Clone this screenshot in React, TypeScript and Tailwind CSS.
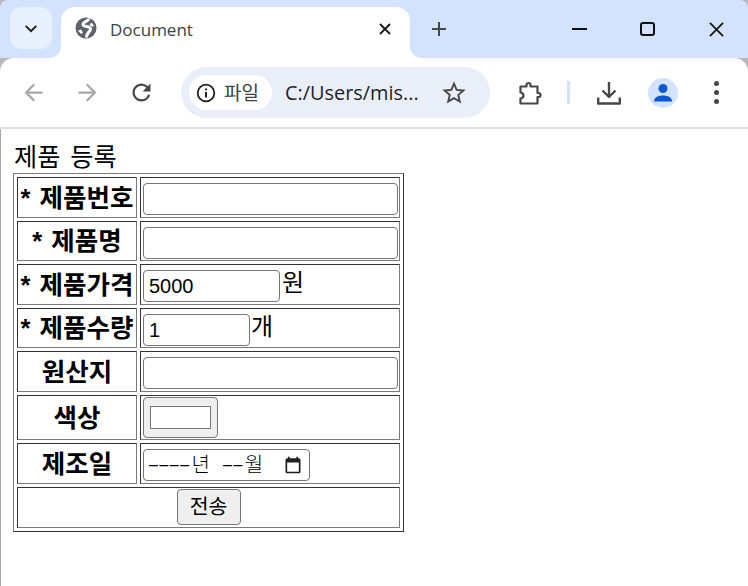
import React from "react";

const cellBorder = "border border-t-[#333333] border-l-[#333333] border-r-[#7a7a7a] border-b-[#7a7a7a] p-0";
const thBase = `${cellBorder} w-[120px] pt-[2px] text-center align-middle font-bold text-[25.500px] leading-none whitespace-nowrap [word-spacing:2px]`;
const tdBase = `${cellBorder} w-[260px] pl-[2px] pt-[5px] align-top`;
const inputBase = "block h-[32px] border border-[#767676] rounded-[4px] bg-white px-[5px] text-[20px] text-black outline-none [font-family:'Liberation_Sans',sans-serif]";

const Ico = ({ x = 24, cls, children }: { x?: number; cls: string; children: React.ReactNode }) => (
  <svg viewBox={`0 0 ${x} ${x}`} className={cls} fill="currentColor">{children}</svg>
);

const Label = ({ star, children }: { star?: boolean; children: string }) => (
  <span>{star ? "* " : ""}{children}</span>
);

function Tabs() {
  return (
    <div className="relative flex h-[58px] shrink-0 rounded-t-[8px] bg-[#d3e3fd] pt-[7px]">
      <div className="ml-[10px] flex h-[42px] w-[42px] items-center justify-center rounded-[12px] bg-[#e8f0fe] text-[#1f1f1f]">
        <Ico cls="h-[20px] w-[20px]"><path d="M6.400 8.600 12 14.200l5.600-5.600 1.600 1.600L12 17.400 4.800 10.200z" /></Ico>
      </div>
      <div className="relative ml-[9px] flex h-[51px] w-[349px] items-center rounded-t-[14px] bg-white pb-[5px] pl-[14px]">
        <svg viewBox="0 0 12 12" className="absolute bottom-0 left-[-12px] h-[12px] w-[12px] text-white" fill="currentColor"><path d="M12 0v12H0c7 0 12-5 12-12z" /></svg>
        <svg viewBox="0 0 12 12" className="absolute bottom-0 right-[-12px] h-[12px] w-[12px] text-white" fill="currentColor"><path d="M0 0v12h12C5 12 0 7 0 0z" /></svg>
        <svg viewBox="0 0 22 22" className="mb-[4px] h-[22px] w-[22px]">
          <circle cx="11" cy="11" r="10.500" fill="#5f6368" />
          <path d="M13.500 1.500c.5 3-5.500 2.500-5.500 6 0 3 7.500 1 7.500 4.500 0 3-4 3-4 8.500" fill="none" stroke="#ffffff" strokeWidth="3" />
          <path d="M16.500 5.500l2.500 3-1.500 1.500-3-2zM3 13.500l3-1 2 3-2 1.500z" fill="#ffffff" />
        </svg>
        <span className="ml-[13px] text-[17px] text-[#3c4043] [font-family:'Open_Sans',sans-serif]">Document</span>
        <svg viewBox="0 0 14 14" className="absolute right-[18px] top-[15px] h-[14px] w-[14px] text-[#1f1f1f]" fill="none" stroke="currentColor" strokeWidth="2"><path d="M2 2l10 10M12 2 2 12" /></svg>
      </div>
      <svg viewBox="0 0 16 16" className="ml-[21px] mt-[14px] h-[16px] w-[16px] text-[#474747]" fill="none" stroke="currentColor" strokeWidth="2"><path d="M8 1v14M1 8h14" /></svg>
      <div className="ml-auto flex h-[44px] items-center text-[#111111]">
        <div className="mr-[53px] h-[2px] w-[15px] bg-current" />
        <div className="mr-[54px] h-[14px] w-[15px] rounded-[3px] border-2 border-current" />
        <svg viewBox="0 0 16 16" className="mr-[24px] h-[15px] w-[15px]" fill="none" stroke="currentColor" strokeWidth="1.800"><path d="M1 1l14 14M15 1 1 15" /></svg>
      </div>
    </div>
  );
}

function Toolbar() {
  return (
    <div className="relative flex h-[71px] shrink-0 items-center rounded-t-[14px] border-b-2 border-[#e1e1e1] bg-white">
      <Ico cls="ml-[20px] h-[27px] w-[27px] text-[#a8a8a8]"><path d="M20 11H7.800l5.600-5.600L12 4l-8 8 8 8 1.400-1.400L7.800 13H20z" /></Ico>
      <Ico cls="ml-[27px] h-[27px] w-[27px] text-[#a8a8a8]"><path d="M4 11h12.200l-5.600-5.600L12 4l8 8-8 8-1.400-1.400 5.600-5.600H4z" /></Ico>
      <Ico cls="ml-[27px] h-[27px] w-[27px] text-[#474747]"><path d="M17.650 6.350A7.960 7.960 0 0 0 12 4c-4.420 0-7.990 3.580-7.990 8s3.570 8 7.990 8c3.730 0 6.840-2.550 7.730-6h-2.080A5.990 5.990 0 0 1 12 18c-3.310 0-6-2.690-6-6s2.690-6 6-6c1.660 0 3.140.690 4.220 1.780L13 11h7V4z" /></Ico>
      <div className="ml-[26px] flex h-[51px] w-[309px] items-center rounded-full bg-[#e9eef8] pl-[8px]">
        <div className="flex h-[35px] w-[83px] items-center rounded-full bg-white pl-[7px]">
          <svg viewBox="0 0 20 20" className="h-[20px] w-[20px] text-[#1f1f1f]" fill="none" stroke="currentColor" strokeWidth="1.800"><circle cx="10" cy="10" r="8.300" /><path d="M10 9v5.500M10 5.500v1.800" strokeWidth="2" /></svg>
          <span className="ml-[8px] text-[19px] text-[#3c4043] [font-family:'Noto_Sans_CJK_KR',sans-serif]">파일</span>
        </div>
        <span className="ml-[13px] text-[19.900px] text-[#1f1f1f] [font-family:'Open_Sans',sans-serif]">C:/Users/mis...</span>
        <Ico cls="ml-auto mr-[22px] h-[28px] w-[28px] text-[#474747]"><path d="M22 9.240l-7.190-.620L12 2 9.190 8.630 2 9.240l5.460 4.730L5.820 21 12 17.270 18.180 21l-1.630-7.030L22 9.240zM12 15.400l-3.760 2.270 1-4.280-3.320-2.880 4.380-.380L12 6.100l1.710 4.040 4.380.380-3.320 2.880 1 4.280z" /></Ico>
      </div>
      <svg viewBox="0 0 24 24" className="ml-[28px] h-[24px] w-[24px] text-[#474747]" fill="none" stroke="currentColor" strokeWidth="2.200" strokeLinejoin="round"><path d="M2.500 5.500H8.500V4a2 2 0 0 1 4 0V5.500H19.500V12h1a2 2 0 0 1 0 4h-1V22.500H2.500V17.500c2.500-.5 3-2 3-3s-.5-2.500-3-3z" /></svg>
      <div className="ml-[25px] h-[23px] w-[3px] bg-[#d3e3fd]" />
      <svg viewBox="0 0 24 24" className="ml-[27px] h-[24px] w-[24px] text-[#474747]" fill="none" stroke="currentColor" strokeWidth="2.400" strokeLinejoin="round"><path d="M12 1v15M5.500 9.500l6.500 6.500 6.500-6.500M1.200 16.500v6h21.600v-6" /></svg>
      <div className="ml-[27px] flex h-[30px] w-[30px] items-center justify-center rounded-full bg-[#d3e3fd]">
        <Ico cls="h-[24px] w-[24px] text-[#0b57d0]"><circle cx="12" cy="7.500" r="4.500" /><path d="M3 20.500c0-4 4-6 9-6s9 2 9 6z" /></Ico>
      </div>
      <div className="ml-[36px] flex flex-col gap-[4px]">
        <div className="h-[5px] w-[5px] rounded-full bg-[#474747]" />
        <div className="h-[5px] w-[5px] rounded-full bg-[#474747]" />
        <div className="h-[5px] w-[5px] rounded-full bg-[#474747]" />
      </div>
    </div>
  );
}

function Form() {
  return (
    <div className="min-h-0 flex-1 border-l border-[#a8a8a8] bg-white pl-[12px] text-black [font-family:'Liberation_Sans','Noto_Sans_CJK_KR',sans-serif]">
      <div className="ml-[1px] h-[44px] pt-[12px] text-[25.200px] leading-[33px] [word-spacing:3px]">제품 등록</div>
      <table className="w-[391px] table-fixed border-separate border-spacing-[3px] border border-t-[#7a7a7a] border-l-[#7a7a7a] border-r-[#333333] border-b-[#333333]">
        <tbody>
          <tr className="h-[41px]">
            <th className={thBase}><Label star>제품번호</Label></th>
            <td className={tdBase}><input className={`${inputBase} w-[255px]`} /></td>
          </tr>
          <tr className="h-[40px]">
            <th className={thBase}><Label star>제품명</Label></th>
            <td className={tdBase}><input className={`${inputBase} w-[255px]`} /></td>
          </tr>
          <tr className="h-[41px]">
            <th className={thBase}><Label star>제품가격</Label></th>
            <td className={tdBase}>
              <div className="flex items-center text-[24px] leading-none">
                <input className={`${inputBase} w-[137px]`} defaultValue="5000" />
                <span className="mb-[6px] ml-[2px]">원</span>
              </div>
            </td>
          </tr>
          <tr className="h-[40px]">
            <th className={thBase}><Label star>제품수량</Label></th>
            <td className={tdBase}>
              <div className="flex items-center text-[24px] leading-none">
                <input className={`${inputBase} w-[107px]`} defaultValue="1" />
                <span className="mb-[6px] ml-[1px]">개</span>
              </div>
            </td>
          </tr>
          <tr className="h-[41px]">
            <th className={thBase}><Label>원산지</Label></th>
            <td className={tdBase}><input className={`${inputBase} w-[255px]`} /></td>
          </tr>
          <tr className="h-[45px]">
            <th className={thBase}><Label>색상</Label></th>
            <td className={`${cellBorder} w-[260px] pl-[2px] pt-[1px] align-top`}>
              <div className="flex h-[41px] w-[75px] items-center justify-center rounded-[4px] border border-[#767676] bg-[#efefef]">
                <div className="h-[23px] w-[61px] border border-[#767676] bg-white" />
              </div>
            </td>
          </tr>
          <tr className="h-[41px]">
            <th className={thBase}><Label>제조일</Label></th>
            <td className={tdBase}>
              <div className="flex h-[32px] w-[167px] items-center rounded-[4px] border border-[#767676] bg-white pl-[5px] text-[20px] font-light leading-none">
                <span className="whitespace-nowrap text-[16px] tracking-[1.500px]">––––</span>
                <span className="ml-[1px]">년</span>
                <span className="ml-[13px] whitespace-nowrap text-[16px] tracking-[1.500px]">––</span>
                <span className="ml-[1px]">월</span>
                <Ico cls="ml-auto mr-[6px] h-[20px] w-[20px] text-[#1f1f1f]"><path d="M19 4h-1V2h-2v2H8V2H6v2H5a2 2 0 0 0-2 2v14a2 2 0 0 0 2 2h14a2 2 0 0 0 2-2V6a2 2 0 0 0-2-2zm0 16H5V9h14z" /></Ico>
              </div>
            </td>
          </tr>
          <tr className="h-[41px]">
            <td colSpan={2} className={`${cellBorder} pt-[1px] align-top`}>
              <button className="mx-auto flex h-[36px] w-[64px] items-center justify-center rounded-[4px] border border-[#767676] bg-[#efefef] text-[20.500px] text-black">전송</button>
            </td>
          </tr>
        </tbody>
      </table>
    </div>
  );
}

export default function App() {
  return (
    <div className="flex h-[586px] w-[748px] flex-col overflow-hidden bg-[#b8b8b8]">
      <Tabs />
      <Toolbar />
      <Form />
    </div>
  );
}
